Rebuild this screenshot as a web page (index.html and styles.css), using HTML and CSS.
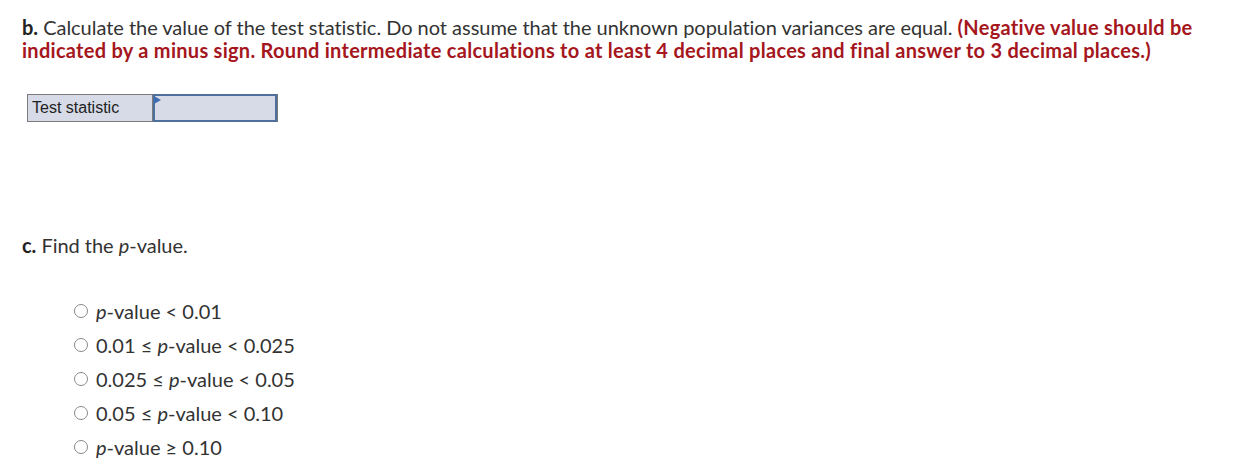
FILE: index.html
```html
<!DOCTYPE html>
<html lang="en">
<head>
<meta charset="utf-8">
<title>Hypothesis test</title>
<link rel="stylesheet" href="styles.css">
</head>
<body>
<div class="question">
  <p class="prompt"><b>b.</b> Calculate the value of the test statistic. Do not assume that the unknown population variances are equal. <strong class="note">(Negative value should be indicated by a minus sign. Round intermediate calculations to at least 4 decimal places and final answer to 3 decimal places.)</strong></p>

  <table class="answer-table">
    <tr>
      <td class="label-cell">Test statistic</td>
      <td class="input-cell"><span class="flag"></span><input type="text" class="answer-input" aria-label="Test statistic"></td>
    </tr>
  </table>

  <p class="prompt part-c"><b>c.</b> Find the <i>p</i>-value.</p>

  <ul class="choices">
    <li><span class="radio"></span><span><i>p</i>-value &lt; 0.01</span></li>
    <li><span class="radio"></span><span>0.01 ≤ <i>p</i>-value &lt; 0.025</span></li>
    <li><span class="radio"></span><span>0.025 ≤ <i>p</i>-value &lt; 0.05</span></li>
    <li><span class="radio"></span><span>0.05 ≤ <i>p</i>-value &lt; 0.10</span></li>
    <li><span class="radio"></span><span><i>p</i>-value ≥ 0.10</span></li>
  </ul>
</div>
</body>
</html>
```

FILE: styles.css
```css
html, body {
  margin: 0;
  padding: 0;
  background: #ffffff;
}

body {
  font-family: "Lato", "Open Sans", sans-serif;
  color: #333333;
}

.question {
  padding: 16px 22px 0 22px;
}

.prompt {
  margin: 0;
  font-size: 20px;
  line-height: 23px;
  letter-spacing: -0.03px;
}

.prompt b {
  font-weight: 700;
  color: #222;
}

.note {
  color: #a5161d;
  font-weight: 700;
  letter-spacing: 0.28px;
}

.answer-table {
  margin: 32px 0 0 5px;
  border-collapse: collapse;
  border: 1px solid #7a7a7a;
  background: #d6dbe7;
}

.answer-table td {
  padding: 0;
  height: 26px;
}

.label-cell {
  width: 120px;
  padding-left: 4px !important;
  font-family: "Liberation Sans", Arial, sans-serif;
  font-size: 16px;
  color: #222;
  border-right: 1px solid #7a7a7a;
}

.input-cell {
  position: relative;
  width: 124px;
}

.answer-input {
  display: block;
  box-sizing: border-box;
  width: 124px;
  height: 28px;
  margin: -1px 0;
  border: 2px solid #4f6f9c;
  background: #d6dbe7;
  outline: none;
}

.flag {
  position: absolute;
  left: 1px;
  top: 1px;
  width: 0;
  height: 0;
  border-top: 4px solid transparent;
  border-bottom: 4px solid transparent;
  border-left: 7px solid #3e6cb0;
}

.part-c {
  margin-top: 112px;
}

.choices {
  list-style: none;
  margin: 37px 0 0 52px;
  padding: 0;
}

.choices li {
  display: flex;
  align-items: center;
  gap: 8px;
  height: 34px;
  font-size: 20px;
}

.radio {
  box-sizing: border-box;
  width: 14px;
  height: 14px;
  border: 1px solid #8a8a8a;
  border-radius: 50%;
  background: #fff;
}
```
